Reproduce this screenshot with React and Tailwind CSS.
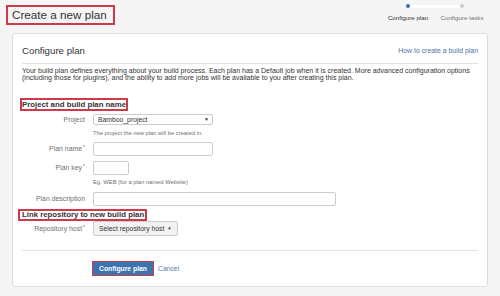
import React from "react";

const font = { fontFamily: '"Liberation Sans", Arial, sans-serif' };

function Req() {
  return <span className="text-[#d04437] text-[5px] align-top ml-[1px] leading-none">*</span>;
}

function Row({ label, req, children, className = "" }) {
  return (
    <div className={"flex items-center gap-[8px] " + className}>
      <div className="w-[63px] text-right text-[6.9px] text-[#707070] leading-[8px] shrink-0">
        {label}
        {req && <Req />}
      </div>
      {children}
    </div>
  );
}

function Help({ children, className = "" }) {
  return (
    <div className={"pl-[71px] text-[5.8px] leading-[7px] text-[#707070] " + className}>{children}</div>
  );
}

export default function App() {
  return (
    <div className="w-[500px] h-[296px] bg-[#f5f5f5] overflow-hidden text-[#333]" style={font}>
      <div className="flex justify-between items-start">
        <div className="ml-[6px] mt-[5px] h-[20px] border-2 border-[#cf3a48] pl-[4px] pr-[6px] flex items-center text-[11.7px] leading-[16px] text-[#333]">
          Create a new plan
        </div>
        <div className="mt-[4px] mr-[11px] w-[108px] flex flex-col">
          <div className="flex items-center px-[25px] h-[4px]">
            <div className="w-[4px] h-[4px] rounded-full bg-[#3b73af] shrink-0" />
            <div className="flex-1 h-[3px] bg-white" />
            <div className="w-[4px] h-[4px] rounded-full bg-[#cccccc] shrink-0" />
          </div>
          <div className="flex mt-[6px] text-[6.2px] leading-[7px]">
            <div className="w-[54px] text-center text-[#333]">Configure plan</div>
            <div className="w-[54px] text-center text-[#707070]">Configure tasks</div>
          </div>
        </div>
      </div>

      <div className="mx-[12px] mt-[8px] h-[254px] bg-white border border-[#dddddd] rounded-[3px] px-[9px] pt-[11px] pb-[10px] flex flex-col">
        <div className="flex justify-between items-center h-[12px]">
          <div className="text-[9.7px] leading-[12px] text-[#333]">Configure plan</div>
          <div className="text-[6.9px] leading-[8px] text-[#4a74a8]">How to create a build plan</div>
        </div>
        <div className="mt-[6px] h-px bg-[#e3e3e3]" />
        <p className="mt-[3px] text-[7px] leading-[7.5px] text-[#333]">
          Your build plan defines everything about your build process. Each plan has a Default job when it is created. More advanced configuration options (including those for plugins), and the ability to add more jobs will be available to you after creating this plan.
        </p>

        <div className="mt-[16px] -ml-[2px] self-start border-2 border-[#cf3a48] text-[7.8px] font-bold leading-[9.4px] text-[#333]">
          Project and build plan name
        </div>

        <Row label="Project" className="mt-[3px]">
          <div className="w-[120px] h-[11px] border border-[#cccccc] rounded-[2px] bg-white flex items-center justify-between pl-[4px] pr-[3px]">
            <span className="text-[6.8px] leading-[8px] text-[#333]">Bamboo_project</span>
            <span className="text-[5px] leading-none text-[#333]">▼</span>
          </div>
        </Row>
        <Help className="mt-[5px]">The project the new plan will be created in.</Help>

        <Row label="Plan name" req className="mt-[5px]">
          <div className="w-[120px] h-[14.4px] border border-[#cccccc] rounded-[2px] bg-white" />
        </Row>
        <Row label="Plan key" req className="mt-[5px]">
          <div className="w-[36px] h-[14px] border border-[#cccccc] rounded-[2px] bg-white" />
        </Row>
        <Help className="mt-[3.5px]">Eg. WEB (for a plan named Website)</Help>

        <Row label="Plan description" className="mt-[6px]">
          <div className="w-[243px] h-[14.4px] border border-[#cccccc] rounded-[2px] bg-white" />
        </Row>

        <div className="mt-[3px] -ml-[4px] self-start border-2 border-[#cf3a48] pl-[2px] pr-[1px] text-[7.8px] font-bold leading-[8px] text-[#333]">
          Link repository to new build plan
        </div>

        <Row label="Repository host" req className="mt-[0px]">
          <div className="h-[15px] px-[5px] border border-[#cccccc] rounded-[2px] bg-[#f2f2f2] flex items-center text-[6.8px] leading-[8px] text-[#333]">
            Select repository host
            <span className="ml-[3px] text-[4.5px]">▼</span>
          </div>
        </Row>

        <div className="mt-[14px] h-px bg-[#e3e3e3]" />

        <div className="mt-[10px] pl-[70px] flex items-center gap-[4px]">
          <div className="h-[15px] w-[62px] border-[1.5px] border-[#cf3a48] bg-[#3b73af] flex items-center justify-center text-[6.8px] font-bold leading-[8px] text-white">
            Configure plan
          </div>
          <span className="text-[6.8px] leading-[8px] text-[#5a7ba8]">Cancel</span>
        </div>
      </div>
    </div>
  );
}
